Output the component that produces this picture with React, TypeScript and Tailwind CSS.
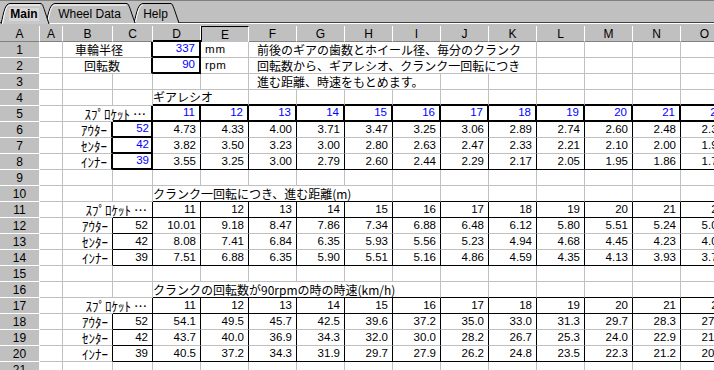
import React from 'react';

type Bd = 'g' | 'b' | 'B';
interface Cell {
  span?: number;
  text?: string;
  blue?: boolean;
  align?: 'l' | 'r';
  r?: Bd;
  b?: Bd;
  t?: 'b' | 'B';
  pad?: string;
  jp?: boolean;
  kana?: boolean;
}

const W = [40, 23, 50, 40, 48, 48, 48, 48, 48, 48, 48, 48, 48, 48, 48, 48];
const HDR = ['A', 'A', 'B', 'C', 'D', 'E', 'F', 'G', 'H', 'I', 'J', 'K', 'L', 'M', 'N', 'O'];

const R_CLS: Record<Bd, string> = {
  g: 'border-r border-r-[#c0c0c0]',
  b: 'border-r border-r-black',
  B: 'border-r-2 border-r-black',
};
const B_CLS: Record<Bd, string> = {
  g: 'border-b border-b-[#c0c0c0]',
  b: 'border-b border-b-black',
  B: 'border-b-2 border-b-black',
};
const T_CLS = { b: 'shadow-[0_-1px_0_0_#000]', B: 'shadow-[0_-2px_0_0_#000]' };

const JP = "font-['Noto_Sans_CJK_JP','Noto_Sans_CJK_SC',sans-serif] text-[12px]";
const KANA = "font-['Noto_Sans_CJK_JP','Noto_Sans_CJK_SC',sans-serif] text-[13px]";
const NUM = "font-['Liberation_Sans',Arial,sans-serif] text-[11.5px]";

const SP = ['11', '12', '13', '14', '15', '16', '17', '18', '19', '20', '21', '22'];
const RATIO = [
  ['4.73', '4.33', '4.00', '3.71', '3.47', '3.25', '3.06', '2.89', '2.74', '2.60', '2.48', '2.36'],
  ['3.82', '3.50', '3.23', '3.00', '2.80', '2.63', '2.47', '2.33', '2.21', '2.10', '2.00', '1.91'],
  ['3.55', '3.25', '3.00', '2.79', '2.60', '2.44', '2.29', '2.17', '2.05', '1.95', '1.86', '1.77'],
];
const DIST = [
  ['10.01', '9.18', '8.47', '7.86', '7.34', '6.88', '6.48', '6.12', '5.80', '5.51', '5.24', '5.00'],
  ['8.08', '7.41', '6.84', '6.35', '5.93', '5.56', '5.23', '4.94', '4.68', '4.45', '4.23', '4.04'],
  ['7.51', '6.88', '6.35', '5.90', '5.51', '5.16', '4.86', '4.59', '4.35', '4.13', '3.93', '3.75'],
];
const SPEED = [
  ['54.1', '49.5', '45.7', '42.5', '39.6', '37.2', '35.0', '33.0', '31.3', '29.7', '28.3', '27.0'],
  ['43.7', '40.0', '36.9', '34.3', '32.0', '30.0', '28.2', '26.7', '25.3', '24.0', '22.9', '21.8'],
  ['40.5', '37.2', '34.3', '31.9', '29.7', '27.9', '26.2', '24.8', '23.5', '22.3', '21.2', '20.3'],
];
const LABELS = ['ｱｳﾀｰ', 'ｾﾝﾀｰ', 'ｲﾝﾅｰ'];
const CHAIN = ['52', '42', '39'];
const SPROCKET = 'ｽﾌﾟﾛｹｯﾄ …';

const blank = (n: number, extra: Cell = {}): Cell[] => Array.from({ length: n }, () => ({ ...extra }));

function buildRows(): Cell[][] {
  const rows: Cell[][] = [];
  rows.push([
    {},
    { span: 2, text: '車輪半径', jp: true, pad: 'pl-[12px]', r: 'B' },
    { text: '337', blue: true, align: 'r', r: 'B', b: 'B', t: 'B' },
    { text: 'mm', pad: 'pl-[4px] tracking-[1px]' },
    { span: 6, text: '前後のギアの歯数とホイール径、毎分のクランク', jp: true, pad: 'pl-[8px]' },
    ...blank(4),
  ]);
  rows.push([
    {},
    { span: 2, text: '回転数', jp: true, pad: 'pl-[21px]', r: 'B' },
    { text: '90', blue: true, align: 'r', r: 'B', b: 'B' },
    { text: 'rpm', pad: 'pl-[4px] tracking-[0.5px]' },
    { span: 6, text: '回転数から、ギアレシオ、クランク一回転につき', jp: true, pad: 'pl-[8px]' },
    ...blank(4),
  ]);
  rows.push([
    ...blank(5),
    { span: 4, text: '進む距離、時速をもとめます。', jp: true, pad: 'pl-[8px]' },
    ...blank(6),
  ]);
  rows.push([
    ...blank(3),
    { span: 2, text: 'ギアレシオ', jp: true, b: 'B' },
    ...blank(10, { b: 'B' }),
  ]);
  rows.push([
    {},
    { span: 2, text: SPROCKET, kana: true, align: 'r', r: 'B', pad: 'pr-[5px]' },
    ...SP.map((s) => ({ text: s, blue: true, align: 'r' as const, r: 'B' as Bd, b: 'B' as Bd })),
  ]);
  for (let i = 0; i < 3; i++) {
    rows.push([
      {},
      { text: LABELS[i], kana: true, align: 'r', r: 'B', pad: 'pr-[4px]' },
      { text: CHAIN[i], blue: true, align: 'r', r: 'B', b: 'B', t: i === 0 ? 'B' : undefined, pad: 'pr-[2px]' },
      ...RATIO[i].map((v) => ({ text: v, align: 'r' as const, r: 'b' as Bd, b: (i === 2 ? 'b' : 'g') as Bd })),
    ]);
  }
  rows.push(blank(15));
  rows.push([
    ...blank(3),
    { span: 5, text: 'クランク一回転につき、進む距離(m)', jp: true, b: 'b' },
    ...blank(7, { b: 'b' }),
  ]);
  const table = (data: string[][]) => {
    rows.push([
      {},
      { span: 2, text: SPROCKET, kana: true, align: 'r', r: 'b', pad: 'pr-[5px]' },
      ...SP.map((s) => ({ text: s, align: 'r' as const, r: 'b' as Bd, b: 'b' as Bd })),
    ]);
    for (let i = 0; i < 3; i++) {
      rows.push([
        {},
        { text: LABELS[i], kana: true, align: 'r', r: 'b', pad: 'pr-[4px]' },
        { text: CHAIN[i], align: 'r', r: 'b', b: 'b', t: i === 0 ? 'b' : undefined, pad: 'pr-[4px]' },
        ...data[i].map((v) => ({ text: v, align: 'r' as const, r: 'b' as Bd, b: (i === 2 ? 'b' : 'g') as Bd })),
      ]);
    }
  };
  table(DIST);
  rows.push(blank(15));
  rows.push([
    ...blank(3),
    { span: 6, text: 'クランクの回転数が90rpmの時の時速(km/h)', jp: true, b: 'b' },
    ...blank(6, { b: 'b' }),
  ]);
  table(SPEED);
  rows.push(blank(15));
  return rows;
}

function SheetCell({ c, col }: { c: Cell; col: number }) {
  const span = c.span ?? 1;
  let w = 0;
  for (let i = col; i < col + span; i++) w += W[i];
  const r = c.r ?? 'g';
  const b = c.b ?? 'g';
  const align = c.align ?? 'l';
  const pad = c.pad ?? (align === 'r' ? 'pr-[4px]' : 'pl-0');
  const font = c.kana ? KANA : c.jp ? JP : NUM;
  return (
    <div
      className={`relative flex h-[16px] shrink-0 items-center whitespace-nowrap ${R_CLS[r]} ${B_CLS[b]} ${
        c.t ? T_CLS[c.t] : ''
      } ${align === 'r' ? 'justify-end' : 'justify-start'} ${pad} ${font} ${
        c.blue ? 'text-[#0000ff]' : 'text-black'
      } leading-none`}
      style={{ width: w }}
    >
      {c.text}
    </div>
  );
}

function Tabs() {
  return (
    <div className="relative h-[24px] w-[714px] bg-[#c0c0c0]">
      <svg width="714" height="24" className="absolute left-0 top-0">
        <line x1="0" y1="0.5" x2="714" y2="0.5" stroke="#808080" />
        <line x1="0" y1="22.5" x2="714" y2="22.5" stroke="#404040" />
        <line x1="0" y1="23.5" x2="714" y2="23.5" stroke="#ffffff" />
        <path d="M134 23 C137 11 138 4 143 3.5 L171 3.5 C173 4 174 9 179 23" fill="#c0c0c0" stroke="#000" />
        <path d="M135.5 22 C138 11 139 5.5 143 5" fill="none" stroke="#fff" />
        <path d="M46 23 C49 11 50 4 55 3.5 L127 3.5 C129 4 130 9 135 23" fill="#c0c0c0" stroke="#000" />
        <path d="M48 20 C50 11 51 5.5 55 5 L126 5" fill="none" stroke="#fff" />
        <path d="M1 24 C4 11 5 4 10 3.5 L41 3.5 C43 4 44 9 49 24" fill="#c8c8c8" stroke="#000" />
        <path d="M2.5 24 C5 11 6 5.5 10 5 L40 5" fill="none" stroke="#fff" />
      </svg>
      <div className="relative flex h-full items-center pt-[4px] font-['Liberation_Sans',Arial,sans-serif] text-[12px] text-black">
        <div className="ml-[2px] flex w-[44px] justify-center">
          <span className="bg-[#d8d8d8] px-[1px] font-bold leading-[13px]">Main</span>
        </div>
        <div className="flex w-[87px] justify-center">Wheel Data</div>
        <div className="flex w-[45px] justify-center">Help</div>
      </div>
    </div>
  );
}

export default function App() {
  const rows = buildRows();
  return (
    <div className="h-[370px] w-[714px] overflow-hidden bg-white">
      <Tabs />
      <div className="h-[2px] w-[714px] bg-[#c0c0c0]" />
      <div className="w-[729px]">
        <div className="flex h-[16px]">
          {HDR.map((h, i) => (
            <div
              key={i}
              className={`flex h-[16px] shrink-0 items-center justify-center bg-[#c0c0c0] font-['Liberation_Sans',Arial,sans-serif] text-[12px] leading-none text-black ${
                i === 5
                  ? 'border-l border-t border-l-black border-t-black border-r border-r-white'
                  : 'border-r border-r-white border-b border-b-[#808080]'
              }`}
              style={{ width: W[i] }}
            >
              {h}
            </div>
          ))}
        </div>
        {rows.map((cells, ri) => {
          let col = 1;
          return (
            <div key={ri} className="flex h-[16px]">
              <div className="flex h-[16px] w-[40px] shrink-0 items-center justify-center border-b border-r border-b-white border-r-white bg-[#c0c0c0] font-['Liberation_Sans',Arial,sans-serif] text-[12px] leading-none text-black">
                {ri + 1}
              </div>
              {cells.map((c, ci) => {
                const el = <SheetCell key={ci} c={c} col={col} />;
                col += c.span ?? 1;
                return el;
              })}
            </div>
          );
        })}
      </div>
    </div>
  );
}
